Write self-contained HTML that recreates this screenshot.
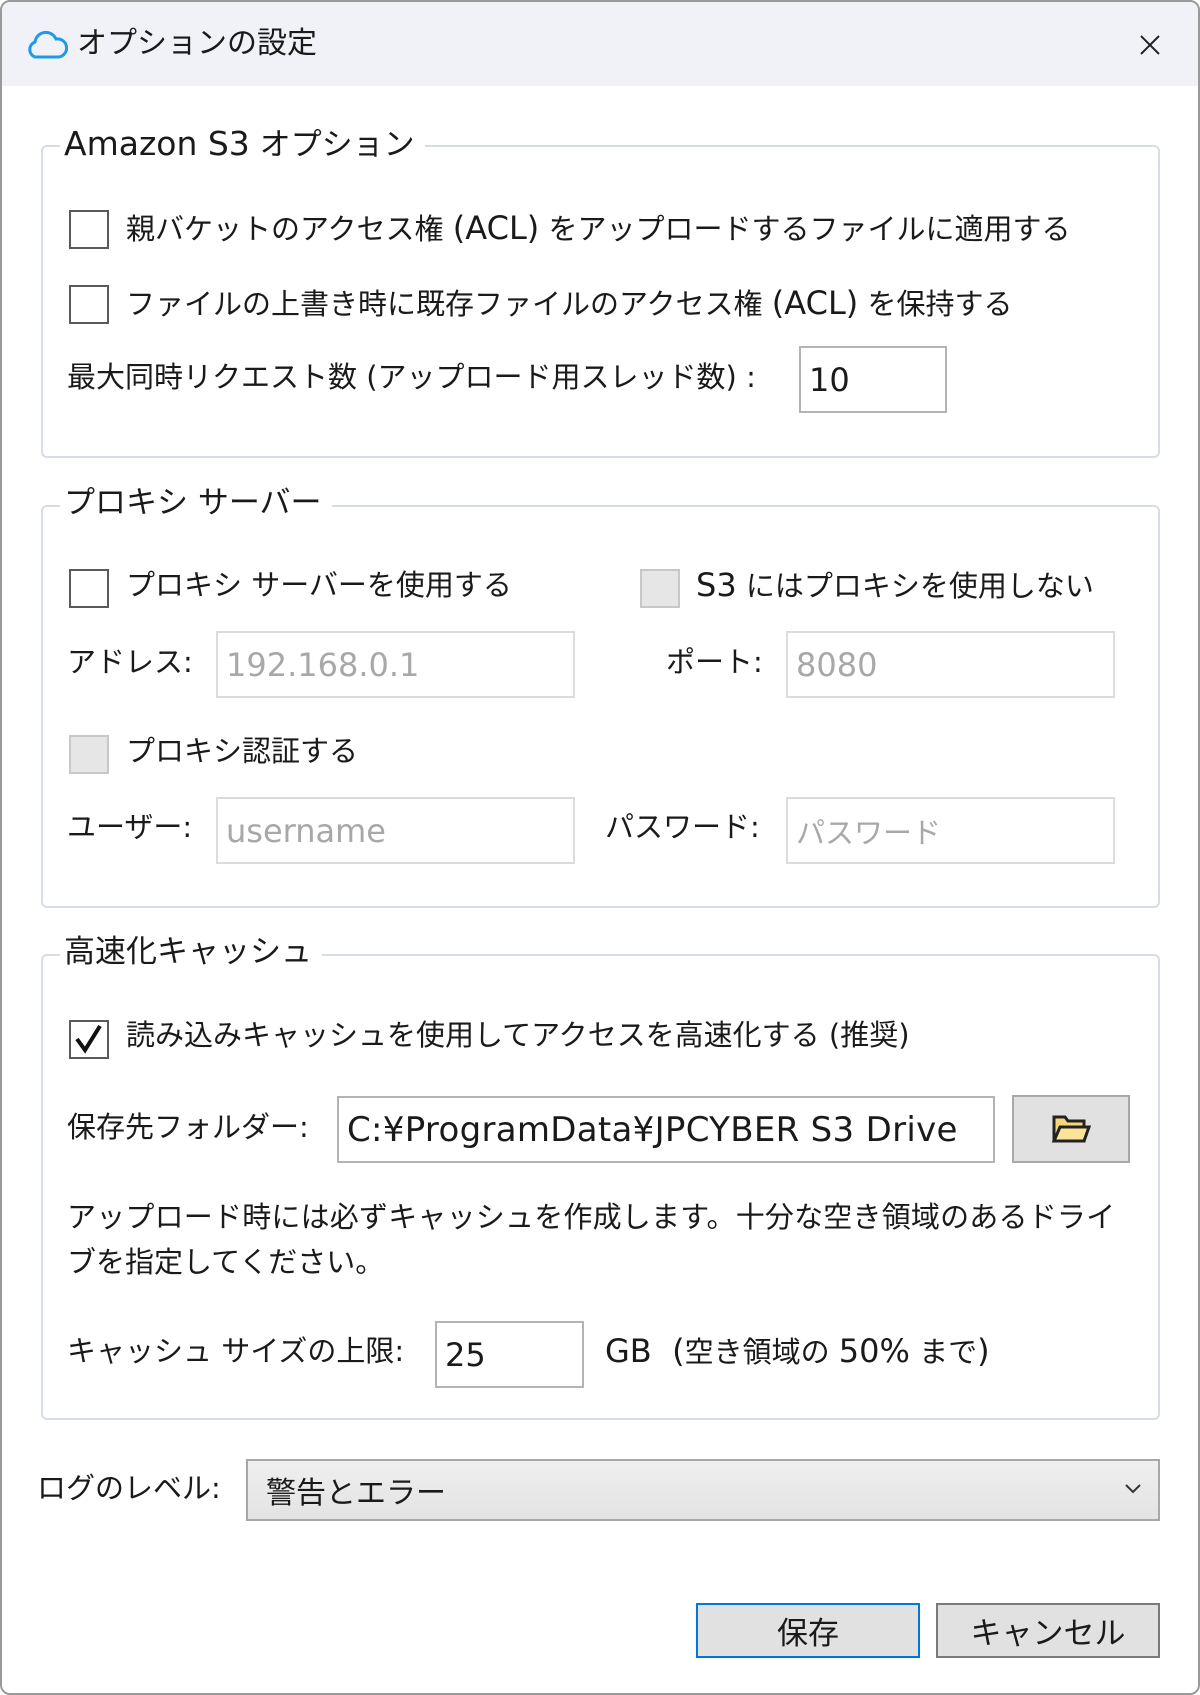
<!DOCTYPE html>
<html><head><meta charset="utf-8"><style>
*{box-sizing:border-box;margin:0;padding:0}
body{width:1200px;height:1695px;background:#fff;font-family:"DejaVu Sans","Noto Sans CJK JP",sans-serif;color:#1a1a1a;position:relative;overflow:hidden;font-size:29px}
.win{position:absolute;left:0;top:0;width:1200px;height:1695px;border:2px solid #9a9a9a;border-radius:10px;overflow:hidden;background:#fff}
.tb{position:absolute;left:0;top:0;width:1200px;height:84px;background:#f1f2f7}
.a{position:absolute;white-space:nowrap;line-height:1}
.l{font-size:32px}
.g{position:absolute;border:2px solid #d7dde6;border-radius:6px}
.leg{position:absolute;background:#fff;padding:0 10px 0 4px;white-space:nowrap;line-height:1;font-size:31px}
.cb{position:absolute;width:40px;height:39px;border:2px solid #5a5a5a;background:#fff}
.cb.d{border-color:#c8c8c8;background:#e6e6e6}
.in{position:absolute;border:2px solid #b4b4b4;background:#fff;padding-left:8px;display:flex;align-items:center;font-size:32px;white-space:nowrap;overflow:hidden}
.in.d{border-color:#dcdcdc;color:#a8a8a8}
.btn{position:absolute;background:#e1e1e1;border:2px solid #a8a8a8;display:flex;align-items:center;justify-content:center;font-size:31px}
</style></head><body><div class="win">
<div class="tb"></div>
<svg class="a" style="left:24px;top:28px" width="42" height="30" viewBox="0 0 42 30"><path d="M9 27 A8 8 0 0 1 9 12 A11 11 0 0 1 30 9 A9 9 0 0 1 33 27 Z" fill="none" stroke="#1e9be8" stroke-width="3"/></svg>
<div class="a" style="left:75px;top:27px;font-size:30px">オプションの設定</div>
<svg class="a" style="left:1137px;top:32px" width="22" height="22"><path d="M2 2L20 20M20 2L2 20" stroke="#222" stroke-width="2"/></svg>

<div class="g" style="left:39px;top:143px;width:1119px;height:313px"></div>
<div class="leg" style="left:58px;top:125px"><span style="font-size:33px">Amazon S3</span> オプション</div>
<div class="cb" style="left:67px;top:208px"></div>
<div class="a" style="left:124px;top:210px">親バケットのアクセス権 <span class="l">(ACL)</span> をアップロードするファイルに適用する</div>
<div class="cb" style="left:67px;top:283px"></div>
<div class="a" style="left:124px;top:285px">ファイルの上書き時に既存ファイルのアクセス権 <span class="l">(ACL)</span> を保持する</div>
<div class="a" style="left:65px;top:361px">最大同時リクエスト数 (アップロード用スレッド数) :</div>
<div class="in" style="left:797px;top:344px;width:148px;height:67px">10</div>

<div class="g" style="left:39px;top:503px;width:1119px;height:403px"></div>
<div class="leg" style="left:58px;top:486px">プロキシ サーバー</div>
<div class="cb" style="left:67px;top:567px"></div>
<div class="a" style="left:124px;top:569px">プロキシ サーバーを使用する</div>
<div class="cb d" style="left:638px;top:567px"></div>
<div class="a" style="left:694px;top:567px"><span class="l">S3</span> にはプロキシを使用しない</div>
<div class="a" style="left:65px;top:646px">アドレス:</div>
<div class="in d" style="left:214px;top:629px;width:359px;height:67px">192.168.0.1</div>
<div class="a" style="left:664px;top:646px">ポート:</div>
<div class="in d" style="left:784px;top:629px;width:329px;height:67px">8080</div>
<div class="cb d" style="left:67px;top:733px"></div>
<div class="a" style="left:124px;top:735px">プロキシ認証する</div>
<div class="a" style="left:65px;top:811px">ユーザー:</div>
<div class="in d" style="left:214px;top:795px;width:359px;height:67px">username</div>
<div class="a" style="left:603px;top:811px">パスワード:</div>
<div class="in d" style="left:784px;top:795px;width:329px;height:67px;font-size:29px">パスワード</div>

<div class="g" style="left:39px;top:952px;width:1119px;height:466px"></div>
<div class="leg" style="left:58px;top:935px">高速化キャッシュ</div>
<div class="cb" style="left:67px;top:1018px"><svg width="36" height="35" viewBox="0 0 36 35"><path d="M6 17 L14 28 L29 4" fill="none" stroke="#111" stroke-width="4"/></svg></div>
<div class="a" style="left:124px;top:1019px">読み込みキャッシュを使用してアクセスを高速化する (推奨)</div>
<div class="a" style="left:65px;top:1111px">保存先フォルダー:</div>
<div class="in" style="left:335px;top:1094px;width:658px;height:67px;font-size:34px;letter-spacing:0.3px">C:¥ProgramData¥JPCYBER S3 Drive</div>
<div class="btn" style="left:1010px;top:1093px;width:118px;height:68px"><svg width="40" height="32" viewBox="0 0 40 32"><path d="M3 4 H14 L17 8 H33 V28 H3 Z" fill="#f5d77a" stroke="#222" stroke-width="3"/><path d="M3 28 L9 14 H38 L33 28 Z" fill="#fbe49a" stroke="#222" stroke-width="3"/></svg></div>
<div class="a" style="left:65px;top:1201px;letter-spacing:0.2px">アップロード時には必ずキャッシュを作成します。十分な空き領域のあるドライ</div>
<div class="a" style="left:65px;top:1246px">ブを指定してください。</div>
<div class="a" style="left:65px;top:1335px">キャッシュ サイズの上限:</div>
<div class="in" style="left:433px;top:1319px;width:149px;height:67px">25</div>
<div class="a" style="left:603px;top:1333px"><span class="l">GB&nbsp;&nbsp;(</span>空き領域の <span class="l">50%</span> まで<span class="l">)</span></div>

<div class="a" style="left:35px;top:1472px">ログのレベル:</div>
<div class="btn" style="left:244px;top:1457px;width:914px;height:62px;justify-content:flex-start;padding-left:18px;background:linear-gradient(#efefef,#e3e3e3);font-size:30px">警告とエラー</div>
<svg class="a" style="left:1122px;top:1481px" width="18" height="12"><path d="M2 2L9 9L16 2" fill="none" stroke="#333" stroke-width="2"/></svg>

<div class="btn" style="left:694px;top:1601px;width:224px;height:55px;border-color:#0078d7">保存</div>
<div class="btn" style="left:934px;top:1601px;width:224px;height:55px;border-color:#7a7a7a">キャンセル</div>
</div></body></html>
